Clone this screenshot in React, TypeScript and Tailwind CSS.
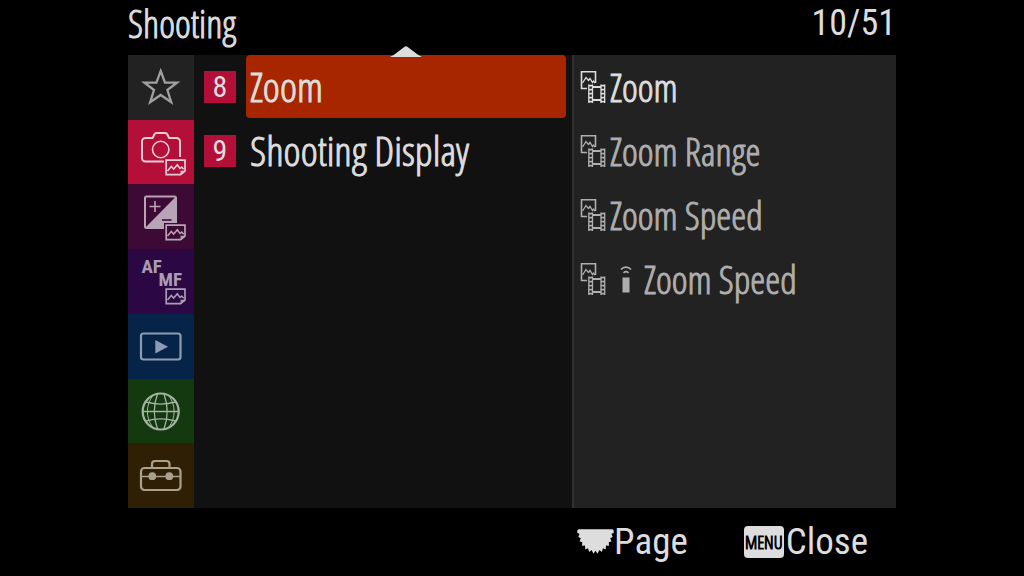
import { useState } from "react";
import type { ReactNode } from "react";

function Still() {
  return (
    <g fill="none" stroke="currentColor" strokeWidth="1.7">
      <path d="M38.2 40.2H57V51L52.5 54.7H38.2Z" />
      <path d="M57 51.3H53.2V54.5" strokeWidth="1.3" />
      <path d="M39.5 51l3.8-4.6 2.4 2.6 3.6-4.3 2.7 3.8 1.8-1.5 1.8 2.3" strokeWidth="1.5" />
    </g>
  );
}

function TabIcon({ children }: { children: ReactNode }) {
  return (
    <svg viewBox="0 0 66 64" className="h-16 w-[66px] shrink-0" aria-hidden="true">
      {children}
    </svg>
  );
}

const tabs: { name: string; style: string; icon: ReactNode }[] = [
  {
    name: "My Menu",
    style: "bg-[#222222] text-[#a0a0a0]",
    icon: (
      <path
        d="M32.7 16l4.3 11.6 12 0-9.6 7.4 3.8 12.2-10.5-7.2-10.5 7.2 3.8-12.2-9.6-7.4h12z"
        fill="none"
        stroke="currentColor"
        strokeWidth="2.3"
      />
    ),
  },
  {
    name: "Shooting",
    style: "bg-[#b40f38] text-[#eccbd5]",
    icon: (
      <>
        <g fill="none" stroke="currentColor">
          <path
            d="M36 41.5H17.5a3.500 3.500 0 0 1-3.500-3.500V21.500a3.500 3.500 0 0 1 3.500-3.500H24.500L26.500 14.200a2.200 2.200 0 0 1 1.900-1.200H37.300a2.200 2.200 0 0 1 1.900 1.200L41.200 18H48.500a3.500 3.500 0 0 1 3.500 3.500V37"
            strokeWidth="2"
          />
          <circle cx="32.700" cy="29.500" r="8.200" strokeWidth="1.600" />
        </g>
        <Still />
      </>
    ),
  },
  {
    name: "Exposure/Color",
    style: "bg-[#3d0a36] text-[#b9a4b7]",
    icon: (
      <>
        <rect x="17" y="11.500" width="31" height="31.500" rx="1.500" fill="none" stroke="currentColor" strokeWidth="2" />
        <path d="M48 11.500V43H17z" fill="currentColor" />
        <path d="M21.500 21.500h11M27 16v11" stroke="currentColor" strokeWidth="1.600" />
        <path d="M34 35h9.500" stroke="#3d0a36" strokeWidth="1.600" />
        <path d="M36 38H49V57H36z" fill="#3d0a36" />
        <Still />
      </>
    ),
  },
  {
    name: "Focus",
    style: "bg-[#2b0843] text-[#aa9db3]",
    icon: (
      <>
        <text x="13.500" y="23.500" className="font-['Roboto_Condensed'] text-[19px] font-bold [-webkit-text-stroke:0px]" fill="currentColor">
          AF
        </text>
        <text x="30.500" y="36.500" className="font-['Roboto_Condensed'] text-[19px] font-bold [-webkit-text-stroke:0px]" fill="currentColor">
          MF
        </text>
        <Still />
      </>
    ),
  },
  {
    name: "Playback",
    style: "bg-[#062348] text-[#8c9db1]",
    icon: (
      <>
        <rect x="13" y="19.500" width="39.500" height="26" rx="2.500" fill="none" stroke="currentColor" strokeWidth="2.200" />
        <path d="M27.300 26v13.500L40 32.700z" fill="currentColor" />
      </>
    ),
  },
  {
    name: "Network",
    style: "bg-[#14380f] text-[#a3b4a1]",
    icon: (
      <g fill="none" stroke="currentColor" strokeWidth="1.300">
        <circle cx="32.700" cy="32.500" r="18" strokeWidth="2.200" />
        <path d="M14.500 32.500h36.500M29.500 15c-4 11-4 24 0 35M36 15c4 11 4 24 0 35" />
        <path d="M25 16.500c-7.500 9-7.500 23 0 32M40.500 16.500c7.500 9 7.500 23 0 32" strokeWidth="1" />
        <path d="M18 23c9 2.500 20.500 2.500 29.500 0M18 42c9-2.500 20.500-2.500 29.500 0" />
      </g>
    ),
  },
  {
    name: "Setup",
    style: "bg-[#2f2005] text-[#aaa08e]",
    icon: (
      <>
        <g fill="none" stroke="currentColor" strokeWidth="2.200">
          <rect x="13" y="24" width="39.500" height="22" rx="3.500" />
          <path d="M24 23.500V20a3 3 0 0 1 3-3H38.500a3 3 0 0 1 3 3V23.500" />
          <path d="M13 32.500H52.500" strokeWidth="1.500" />
        </g>
        <circle cx="24.300" cy="32.200" r="3.900" fill="currentColor" />
        <circle cx="41.300" cy="32.200" r="3.900" fill="currentColor" />
      </>
    ),
  },
];

const groups = [
  { number: 8, name: "Zoom" },
  { number: 9, name: "Shooting Display" },
];

const settings = [
  { name: "Zoom", enabled: true, remote: false },
  { name: "Zoom Range", enabled: false, remote: false },
  { name: "Zoom Speed", enabled: false, remote: false },
  { name: "Zoom Speed", enabled: false, remote: true },
];

function StillMovieIcon() {
  return (
    <svg viewBox="0 0 26 32" className="h-8 w-[26px] shrink-0" aria-hidden="true">
      <g fill="none" stroke="currentColor">
        <path d="M7 17.500H1.500V0.800H15.500V12" strokeWidth="1.600" />
        <path d="M2.500 12l3.500-5.500 2.500 3 1.500-2 2.500 4 1-1.500 1.500 2" strokeWidth="1.300" />
        <path d="M8.800 13.500v18.500M12.500 13.500v18.500M21 13.500v18.500M24.700 13.500v18.500" strokeWidth="1.300" />
        <path d="M10.700 13.800v18.200M22.800 13.800v18.200" strokeWidth="4" strokeDasharray="1.700 2.300" />
        <path d="M12.500 16h8.500M12.500 29h8.500" strokeWidth="1.800" />
      </g>
    </svg>
  );
}

function RemoteIcon() {
  return (
    <svg viewBox="0 0 12 28" className="mr-2 ml-2.5 h-7 w-3 shrink-0" aria-hidden="true">
      <path d="M1 4.500a6.500 6.500 0 0 1 10 0M3.500 7.800a3.600 3.600 0 0 1 5 0" fill="none" stroke="currentColor" strokeWidth="1.600" />
      <rect x="2.500" y="12.500" width="7" height="15" fill="currentColor" />
    </svg>
  );
}

function DialIcon() {
  return (
    <svg viewBox="0 0 37 26" className="h-[26px] w-[37px] shrink-0" aria-hidden="true">
      <path
        d="M1.500 0.300H35.500L36.700 1.500V4L34.500 4.800 35.700 8 33.200 9.200 34.500 12.500 31.800 13 32 16.800 29 16.500 28.700 20.500 26 19.200 24.800 23 22.500 21 20.500 24.800 18.500 21.800 16.500 24.800 14.500 21 12.200 23 11 19.200 8.300 20.500 8 16.500 5 16.800 5.200 13 2.500 12.500 3.800 9.200 1.300 8 2.500 4.800 0.300 4V1.500z"
        fill="currentColor"
      />
    </svg>
  );
}

export default function App() {
  const [tab, setTab] = useState("Shooting");
  const [group, setGroup] = useState(8);

  return (
    <div className="min-h-screen bg-black font-['Open_Sans_Condensed_Light','Roboto_Condensed',sans-serif] text-[#dddddd] [-webkit-text-stroke:1px]">
      <div className="mx-auto flex min-h-screen w-3/4 flex-col">
        <header className="flex h-[55px] items-start justify-between">
          <h1 className="text-[38px] leading-[46px]">{tab}</h1>
          <p className="font-['Roboto_Condensed',sans-serif] text-4xl leading-[46px] [-webkit-text-stroke:0px]">10/51</p>
        </header>

        <main className="flex grow bg-[#111111]">
          <nav className="grid w-[66px] shrink-0 auto-rows-fr" aria-label="Menu tabs">
            {tabs.map((t) => (
              <button
                key={t.name}
                type="button"
                aria-label={t.name}
                onClick={() => setTab(t.name)}
                className={`flex items-center justify-center overflow-hidden ${t.style}`}
              >
                <TabIcon>{t.icon}</TabIcon>
              </button>
            ))}
          </nav>

          <ul className="relative min-w-0 flex-1 pr-1.5 pl-2.5">
            {groups.map((g) => (
              <li key={g.number}>
                <button type="button" onClick={() => setGroup(g.number)} className="flex h-16 w-full items-center gap-2.5 pb-px text-left">
                  <span className="flex h-8 w-8 shrink-0 items-center justify-center bg-[#b40f38] font-['Roboto_Condensed',sans-serif] text-3xl [-webkit-text-stroke:0px]">
                    {g.number}
                  </span>
                  <span
                    className={`flex h-full grow items-center rounded-sm pl-1 text-[41px] whitespace-nowrap ${g.number === group ? "bg-[#a72600]" : ""}`}
                  >
                    {g.name}
                  </span>
                </button>
              </li>
            ))}
            <li className="absolute -top-2.5 left-[196px]" aria-hidden="true">
              <svg viewBox="0 0 32 12" className="h-3 w-8">
                <path d="M0 12Q3 10.500 5 9L14 2.200Q16 0.500 18 2.200L27 9Q29 10.500 32 12z" fill="#dddddd" />
              </svg>
            </li>
          </ul>

          <ul className="min-w-0 flex-[0_0_324px] border-l-2 border-[#303030] bg-[#222222] pl-1.5">
            {settings.map((s, i) => (
              <li key={i}>
                <button
                  type="button"
                  className={`flex h-16 w-full items-center gap-1 text-left text-[38px] whitespace-nowrap ${s.enabled ? "text-[#dddddd]" : "text-[#aeaeae]"}`}
                >
                  <StillMovieIcon />
                  {s.remote && <RemoteIcon />}
                  <span>{s.name}</span>
                </button>
              </li>
            ))}
          </ul>
        </main>

        <footer className="flex h-[68px] items-center justify-end gap-14 pr-7 font-['Roboto_Condensed',sans-serif] text-[37px] [-webkit-text-stroke:0px]">
          <button type="button" className="flex items-center">
            <DialIcon />
            <span>Page</span>
          </button>
          <button type="button" className="flex items-center gap-0.5">
            <span className="flex h-8 w-10 items-center justify-center rounded-sm bg-[#dddddd] font-['Open_Sans_Condensed_Light',sans-serif] text-lg text-black [-webkit-text-stroke:1px]">
              MENU
            </span>
            <span>Close</span>
          </button>
        </footer>
      </div>
    </div>
  );
}
